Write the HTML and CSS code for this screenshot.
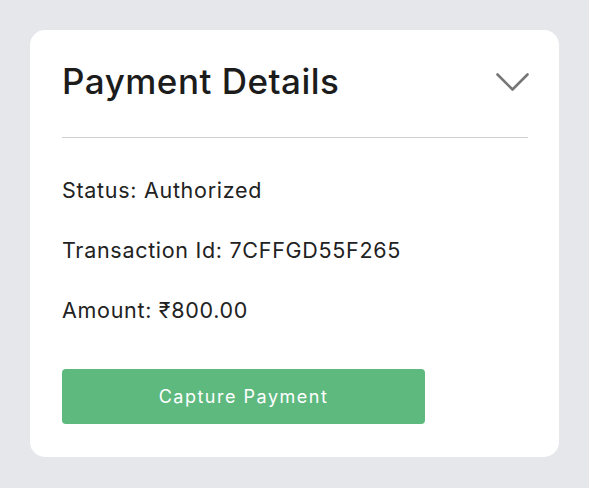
FILE: index.html
```html
<!DOCTYPE html>
<html lang="en">
<head>
<meta charset="utf-8">
<title>Payment Details</title>
<link rel="stylesheet" href="styles.css">
</head>
<body>
<main class="page">
  <section class="card">
    <header class="card-header">
      <h2 class="card-title">Payment Details</h2>
      <button class="toggle" aria-label="Collapse">
        <svg width="33" height="19" viewBox="0 0 33 19" aria-hidden="true">
          <path d="M1.5 1.5 L16.5 16.5 L31.5 1.5" fill="none" stroke="#767676" stroke-width="2.6" stroke-linecap="round" stroke-linejoin="round"/>
        </svg>
      </button>
    </header>
    <hr class="divider">
    <div class="details">
      <p class="detail">Status: Authorized</p>
      <p class="detail">Transaction Id: 7CFFGD55F265</p>
      <p class="detail">Amount: ₹800.00</p>
    </div>
    <button class="capture">Capture Payment</button>
  </section>
</main>
</body>
</html>
```

FILE: styles.css
```css
* { box-sizing: border-box; }

html, body {
  margin: 0;
  padding: 0;
}

body {
  background: #e5e7eb;
  font-family: Inter, "Open Sans", "Liberation Sans", sans-serif;
  color: #1f1f1f;
}

.page {
  padding: 30px 30px 31px 30px;
}

.card {
  width: 529px;
  height: 427px;
  background: #ffffff;
  border-radius: 15px;
  padding: 29px 31px 33px 32px;
  display: flex;
  flex-direction: column;
}

.card-header {
  display: flex;
  align-items: center;
  justify-content: space-between;
  height: 44px;
}

.card-title {
  margin: 0;
  font-size: 35px;
  font-weight: 500;
  line-height: 44px;
  color: #1c1c1c;
  letter-spacing: 0.5px;
}

.toggle {
  border: 0;
  background: none;
  padding: 0;
  width: 33px;
  height: 19px;
  margin-right: -1px;
  margin-top: 2px;
  display: flex;
}

.divider {
  border: 0;
  border-top: 1px solid #cfcfcf;
  margin: 34px 0 0 0;
}

.details {
  display: flex;
  flex-direction: column;
  gap: 32px;
  margin-top: 38px;
}

.detail {
  margin: 0;
  font-size: 21.5px;
  line-height: 28px;
  color: #222222;
  letter-spacing: 0.7px;
}

.capture {
  margin-top: 45px;
  width: 363px;
  height: 55px;
  border: 0;
  border-radius: 4px;
  background: #5eb97f;
  color: #ffffff;
  font-family: inherit;
  font-size: 18px;
  font-weight: 400;
  letter-spacing: 1.5px;
  padding: 0;
}
```
